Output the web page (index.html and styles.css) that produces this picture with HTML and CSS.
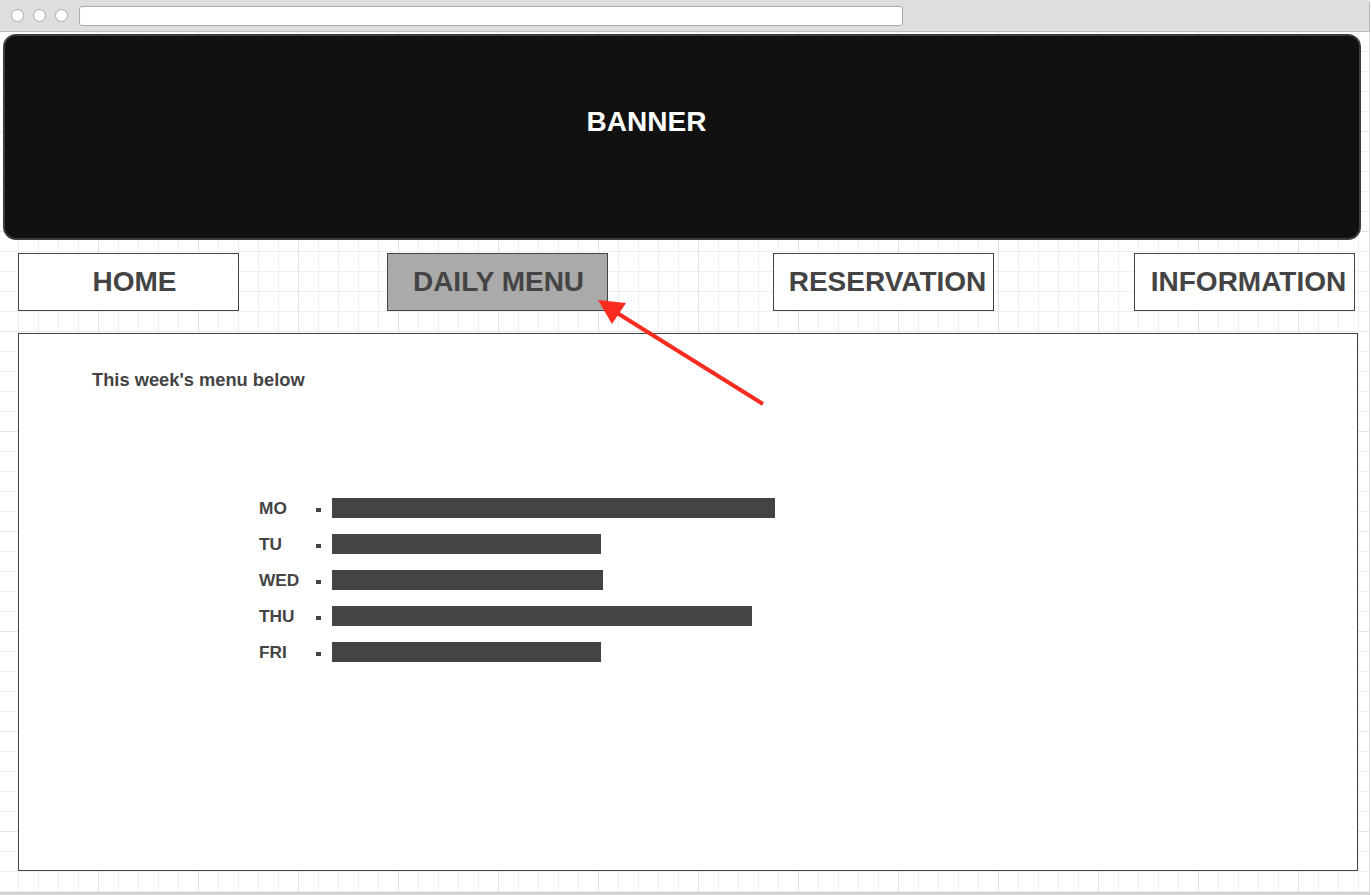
FILE: index.html
```html
<!DOCTYPE html>
<html lang="en">
<head>
<meta charset="utf-8">
<title>Daily Menu Wireframe</title>
<link rel="stylesheet" href="styles.css">
</head>
<body>
<div class="window">
  <div class="chrome">
    <span class="dot"></span>
    <span class="dot"></span>
    <span class="dot"></span>
    <div class="url"></div>
  </div>
  <div class="canvas">
    <div class="banner">BANNER</div>
    <nav class="nav">
      <div class="btn btn-home">HOME</div>
      <div class="btn btn-daily active">DAILY MENU</div>
      <div class="btn btn-res">RESERVATION</div>
      <div class="btn btn-info">INFORMATION</div>
    </nav>
    <section class="panel">
      <h2 class="intro">This week's menu below</h2>
      <ul class="days">
        <li class="day"><span class="label">MO</span><span class="bullet"></span><span class="bar" style="width:443px"></span></li>
        <li class="day"><span class="label">TU</span><span class="bullet"></span><span class="bar" style="width:269px"></span></li>
        <li class="day"><span class="label">WED</span><span class="bullet"></span><span class="bar" style="width:271px"></span></li>
        <li class="day"><span class="label">THU</span><span class="bullet"></span><span class="bar" style="width:420px"></span></li>
        <li class="day"><span class="label">FRI</span><span class="bullet"></span><span class="bar" style="width:269px"></span></li>
      </ul>
    </section>
  </div>
  <div class="bottom"></div>
  <svg class="arrow" width="1371" height="895" viewBox="0 0 1371 895" xmlns="http://www.w3.org/2000/svg">
    <line x1="763" y1="404" x2="614" y2="311" stroke="#f92c1f" stroke-width="4"/>
    <polygon points="598,300 626,303 612,324" fill="#f92c1f"/>
  </svg>
</div>
</body>
</html>
```

FILE: styles.css
```css
* { box-sizing: border-box; }

html, body {
  margin: 0;
  padding: 0;
  background: #fff;
}

body {
  font-family: "Liberation Sans", Arial, Helvetica, sans-serif;
  color: #444;
}

.window {
  position: relative;
  width: 1371px;
  height: 895px;
  display: flex;
  flex-direction: column;
  overflow: hidden;
}

.chrome {
  height: 32px;
  flex: 0 0 32px;
  width: 1370px;
  background: #dedede;
  border-bottom: 1px solid #bdbdbd;
  border-right: 1px solid #b8b8b8;
  border-top-right-radius: 4px;
  display: flex;
  align-items: center;
  padding-left: 11px;
  gap: 9px;
}

.dot {
  width: 13px;
  height: 13px;
  border-radius: 50%;
  background: #fff;
  border: 1px solid #a9a9a9;
}

.url {
  width: 824px;
  height: 20px;
  margin-left: 2px;
  background: #fff;
  border: 1px solid #aaa;
  border-radius: 3px;
}

.canvas {
  flex: 1;
  width: 1370px;
  border-right: 1px solid #e2e2e2;
  background-color: #fff;
  background-image:
    linear-gradient(to right, #e3e3e3 1px, transparent 1px),
    linear-gradient(to bottom, #e3e3e3 1px, transparent 1px),
    linear-gradient(to right, #efefef 1px, transparent 1px),
    linear-gradient(to bottom, #efefef 1px, transparent 1px);
  background-size: 100px 100px, 100px 100px, 20px 20px, 20px 20px;
  background-position: 98px 0, 0 99px, 18px 0, 0 19px;
  padding-top: 2px;
}

.banner {
  margin-left: 3px;
  width: 1358px;
  height: 206px;
  background: #111;
  border: 2px solid #3c3c3c;
  border-radius: 13px;
  color: #fff;
  font-weight: bold;
  font-size: 28px;
  line-height: 28px;
  text-align: center;
  padding-top: 72px;
  padding-right: 71px;
}

.nav {
  display: flex;
  margin-top: 13px;
  height: 58px;
}

.btn {
  width: 221px;
  height: 58px;
  border: 1px solid #444;
  background: #fff;
  font-weight: bold;
  font-size: 28px;
  line-height: 56px;
  text-align: center;
  white-space: nowrap;
  color: #444;
}

.btn.active { background: #aaa; }

.btn-home { margin-left: 18px; padding-left: 12px; }
.btn-daily { margin-left: 148px; padding-left: 2px; }
.btn-res { margin-left: 165px; padding-left: 8px; }
.btn-info { margin-left: 140px; padding-left: 8px; }

.panel {
  margin-top: 22px;
  margin-left: 18px;
  width: 1340px;
  height: 538px;
  background: #fff;
  border: 1px solid #444;
  padding: 37px 0 0 73px;
}

.intro {
  margin: 0;
  font-size: 18.3px;
  line-height: 18px;
  font-weight: bold;
  color: #444;
}

.days {
  list-style: none;
  margin: 109px 0 0 167px;
  padding: 0;
  display: flex;
  flex-direction: column;
  gap: 16px;
}

.day {
  display: flex;
  align-items: center;
  height: 20px;
}

.label {
  width: 57px;
  font-size: 17.3px;
  font-weight: bold;
  line-height: 20px;
  color: #444;
}

.day-first .label { margin-top: 4px; }

.bullet {
  width: 5px;
  height: 4px;
  background: #444;
  margin-top: 3px;
  margin-right: 11px;
}

.bar {
  height: 20px;
  background: #444;
}

.bottom {
  flex: 0 0 3px;
  width: 1370px;
  background: #d2d2d2;
}

.arrow {
  position: absolute;
  left: 0;
  top: 0;
  pointer-events: none;
}
```
